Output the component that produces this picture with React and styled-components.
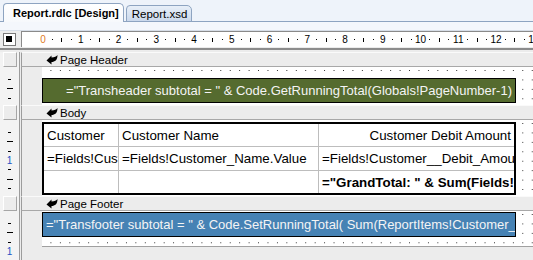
import React from "react";
import styled, { createGlobalStyle } from "styled-components";

const GlobalStyle = createGlobalStyle`
  *, *::before, *::after { box-sizing: border-box; }
  html, body { margin: 0; padding: 0; }
  body {
    background: #ececec;
    font-family: "Liberation Sans", Arial, sans-serif;
    overflow: hidden;
  }
`;

const UNIT = 9.45;

const Page = styled.div`
  width: 533px;
  height: 260px;
  overflow: hidden;
  display: flex;
  flex-direction: column;
  background: #ececec;
`;

const TabStrip = styled.div`
  height: 22px;
  flex: none;
  display: flex;
  align-items: flex-end;
  gap: 2px;
  padding-left: 3px;
  background: #eef3fa;
  border-bottom: 1px solid #8ea4c1;
`;

const Tab = styled.div`
  height: ${(p) => (p.$active ? "19px" : "17px")};
  margin-bottom: -1px;
  display: flex;
  align-items: center;
  padding: ${(p) => (p.$active ? "0 4px 0 9px" : "0 4px 0 5px")};
  font-size: ${(p) => (p.$active ? "11px" : "11.5px")};
  font-weight: ${(p) => (p.$active ? "bold" : "normal")};
  color: #000;
  border: 1px solid #8ea4c1;
  border-bottom: ${(p) => (p.$active ? "none" : "1px solid #8ea4c1")};
  border-radius: 4px 5px 0 0;
  background: ${(p) =>
    p.$active
      ? "linear-gradient(#ffffff, #f7f9fc)"
      : "linear-gradient(#e8eff8, #cbd9ec)"};
`;

const SubStrip = styled.div`
  height: 9px;
  flex: none;
  background: #f4f7fc;
  border-bottom: 1px solid #d6dde7;
`;

const Row = styled.div`
  display: flex;
  flex: none;
  height: ${(p) => p.$h}px;
`;

const FillRow = styled(Row)`
  flex: 1;
  height: auto;
`;

const Side = styled.div`
  width: 20px;
  flex: none;
  background: #f3f3f3;
  border-right: 1px solid #9c9c9c;
  overflow: hidden;
`;

const Main = styled.div`
  flex: 1;
  margin-left: 1px;
  border-left: 1px solid #9c9c9c;
  display: flex;
  min-width: 0;
`;

/* ruler */
const Corner = styled.div`
  width: 21px;
  flex: none;
  display: flex;
  align-items: center;
  justify-content: center;
  padding-right: 3px;
`;

const CornerBox = styled.div`
  width: 13px;
  height: 13px;
  border: 1px solid #7a7a7a;
  background: #fff;
  display: flex;
  align-items: center;
  justify-content: center;
  &::after {
    content: "";
    width: 6px;
    height: 6px;
    background: #000;
  }
`;

const HRuler = styled.div`
  flex: 1;
  display: flex;
  align-items: stretch;
  padding-left: 16.3px;
  background: #fff;
  border-top: 1px solid #8a8a8a;
  border-left: 1px solid #8a8a8a;
  overflow: hidden;
`;

const HCell = styled.div`
  width: ${UNIT}px;
  flex: none;
  display: flex;
  align-items: center;
  justify-content: center;
  font-size: 10px;
  color: ${(p) => (p.$origin ? "#e07a1f" : "#000")};
`;

const HMark = styled.div`
  width: 1px;
  height: ${(p) => (p.$long ? 4 : 1)}px;
  background: #000;
`;

const Divider = styled.div`
  height: 5px;
  flex: none;
  border-top: 1px solid #ececec;
  &::before {
    content: "";
    display: block;
    height: 2px;
    background: #8c8c8c;
  }
`;

/* section band */
const BandButtonCell = styled(Side)`
  padding: 0 0 0 3px;
  display: flex;
  align-items: stretch;
`;

const BandButton = styled.div`
  width: 14px;
  background: #ececec;
  border: 1px solid #a6a6a6;
  border-top-color: #fff;
  border-left-color: #fff;
`;

const Band = styled(Main)`
  align-items: center;
  gap: 2px;
  padding-left: 24px;
  background: #ececec;
  border-top: 1px solid #fafafa;
  border-bottom: 1px solid #a8a8a8;
  font-size: 11.5px;
  color: #000;
`;

const ArrowIcon = () => (
  <svg width="12" height="10" viewBox="0 0 12 10">
    <path
      d="M0.5 5.5 L5.5 0.5 L5.5 2.5 C8.5 2.5 10.5 1.5 11.5 0 C11.5 5 9 7 5.5 7 L5.5 9.5 Z"
      fill="#000"
    />
  </svg>
);

/* vertical ruler */
const VRuler = styled(Side)`
  display: flex;
  flex-direction: column;
  align-items: center;
  padding-top: 7.5px;
`;

const VCell = styled.div`
  height: ${UNIT}px;
  flex: none;
  width: 100%;
  display: flex;
  align-items: center;
  justify-content: center;
  font-size: 10px;
  color: #2453c4;
`;

const VMark = styled.div`
  height: 1px;
  width: ${(p) => (p.$long ? 6 : 3)}px;
  background: #000;
`;

/* report canvas */
const Margin = styled.div`
  width: 20px;
  flex: none;
`;

const Canvas = styled.div`
  flex: 1;
  align-self: ${(p) => (p.$h ? "flex-start" : "stretch")};
  height: ${(p) => (p.$h ? `${p.$h}px` : "auto")};
  padding-top: ${(p) => p.$pt || 0}px;
  background-color: #222;
  background-image: linear-gradient(to right, transparent 1px, #fff 1px),
    linear-gradient(to bottom, transparent 1px, #fff 1px);
  background-size: ${UNIT}px ${UNIT}px;
  background-position: -1px 3px;
  border-bottom: ${(p) => (p.$edge ? "1px solid #a0a0a0" : "none")};
  overflow: hidden;
`;

const TextBox = styled.div`
  width: 474px;
  height: 25px;
  display: flex;
  align-items: center;
  justify-content: ${(p) => (p.$right ? "flex-end" : "flex-start")};
  padding: 0 3px;
  background: ${(p) => p.$bg};
  border: 1.5px solid #000;
  color: #f4f4f4;
  font-size: 13px;
  white-space: nowrap;
  overflow: hidden;
`;

const Table = styled.div`
  width: 474px;
  display: grid;
  grid-template-columns: 75px 200px 1fr;
  grid-template-rows: 23px 24px 22px;
  border: 2px solid #000;
  background: #fff;
`;

const Cell = styled.div`
  display: flex;
  align-items: center;
  justify-content: ${(p) => (p.$right ? "flex-end" : "flex-start")};
  padding: 0 3px;
  font-size: 13.33px;
  font-weight: ${(p) => (p.$bold ? "bold" : "normal")};
  color: #000;
  white-space: nowrap;
  overflow: hidden;
  border-right: ${(p) => (p.$last ? "none" : "1px solid #bdbdbd")};
  border-bottom: ${(p) => (p.$bottom ? "none" : "1px solid #bdbdbd")};
`;

const hMarks = Array.from({ length: 56 }, (_, i) => i);

const VerticalRuler = ({ count }) => (
  <VRuler>
    {Array.from({ length: count }, (_, k) => k + 1).map((i) => (
      <VCell key={i}>
        {i % 4 === 0 ? i / 4 : <VMark $long={i % 4 === 2} />}
      </VCell>
    ))}
  </VRuler>
);

const SectionBand = ({ label }) => (
  <Row $h={15}>
    <BandButtonCell>
      <BandButton />
    </BandButtonCell>
    <Band>
      <ArrowIcon />
      {label}
    </Band>
  </Row>
);

const rows = [
  ["Customer", "Customer Name", "Customer Debit Amount"],
  ["=Fields!Customer_ID.Value", "=Fields!Customer_Name.Value", "=Fields!Customer__Debit_Amount.Value"],
  ["", "", '="GrandTotal: " & Sum(Fields!Customer__Debit_Amount.Value)'],
];

export default function App() {
  return (
    <Page>
      <GlobalStyle />
      <TabStrip>
        <Tab $active>Report.rdlc [Design]</Tab>
        <Tab>Report.xsd</Tab>
      </TabStrip>
      <SubStrip />

      <Row $h={16}>
        <Corner>
          <CornerBox />
        </Corner>
        <HRuler>
          {hMarks.map((i) => (
            <HCell key={i} $origin={i === 0}>
              {i % 4 === 0 ? i / 4 : <HMark $long={i % 4 === 2} />}
            </HCell>
          ))}
        </HRuler>
      </Row>
      <Divider />

      <SectionBand label="Page Header" />
      <Row $h={38}>
        <VerticalRuler count={3} />
        <Main>
          <Margin />
          <Canvas $pt={11}>
            <TextBox $bg="#556b2f" $right>
              ="Transheader subtotal = " &amp; Code.GetRunningTotal(Globals!PageNumber-1)
            </TextBox>
          </Canvas>
        </Main>
      </Row>

      <SectionBand label="Body" />
      <Row $h={76}>
        <VerticalRuler count={7} />
        <Main>
          <Margin />
          <Canvas $pt={2}>
            <Table>
              {rows.map((r, ri) =>
                r.map((c, ci) => (
                  <Cell
                    key={`${ri}-${ci}`}
                    $right={ri === 0 && ci === 2}
                    $bold={ri === 2 && ci === 2}
                    $last={ci === 2}
                    $bottom={ri === 2}
                  >
                    {c}
                  </Cell>
                ))
              )}
            </Table>
          </Canvas>
        </Main>
      </Row>

      <SectionBand label="Page Footer" />
      <FillRow>
        <VerticalRuler count={4} />
        <Main>
          <Margin />
          <Canvas $pt={1} $h={36} $edge>
            <TextBox $bg="#4682b4">
              ="Transfooter subtotal = " &amp; Code.SetRunningTotal( Sum(ReportItems!Customer__Debit_Amount.Value))
            </TextBox>
          </Canvas>
        </Main>
      </FillRow>
    </Page>
  );
}
